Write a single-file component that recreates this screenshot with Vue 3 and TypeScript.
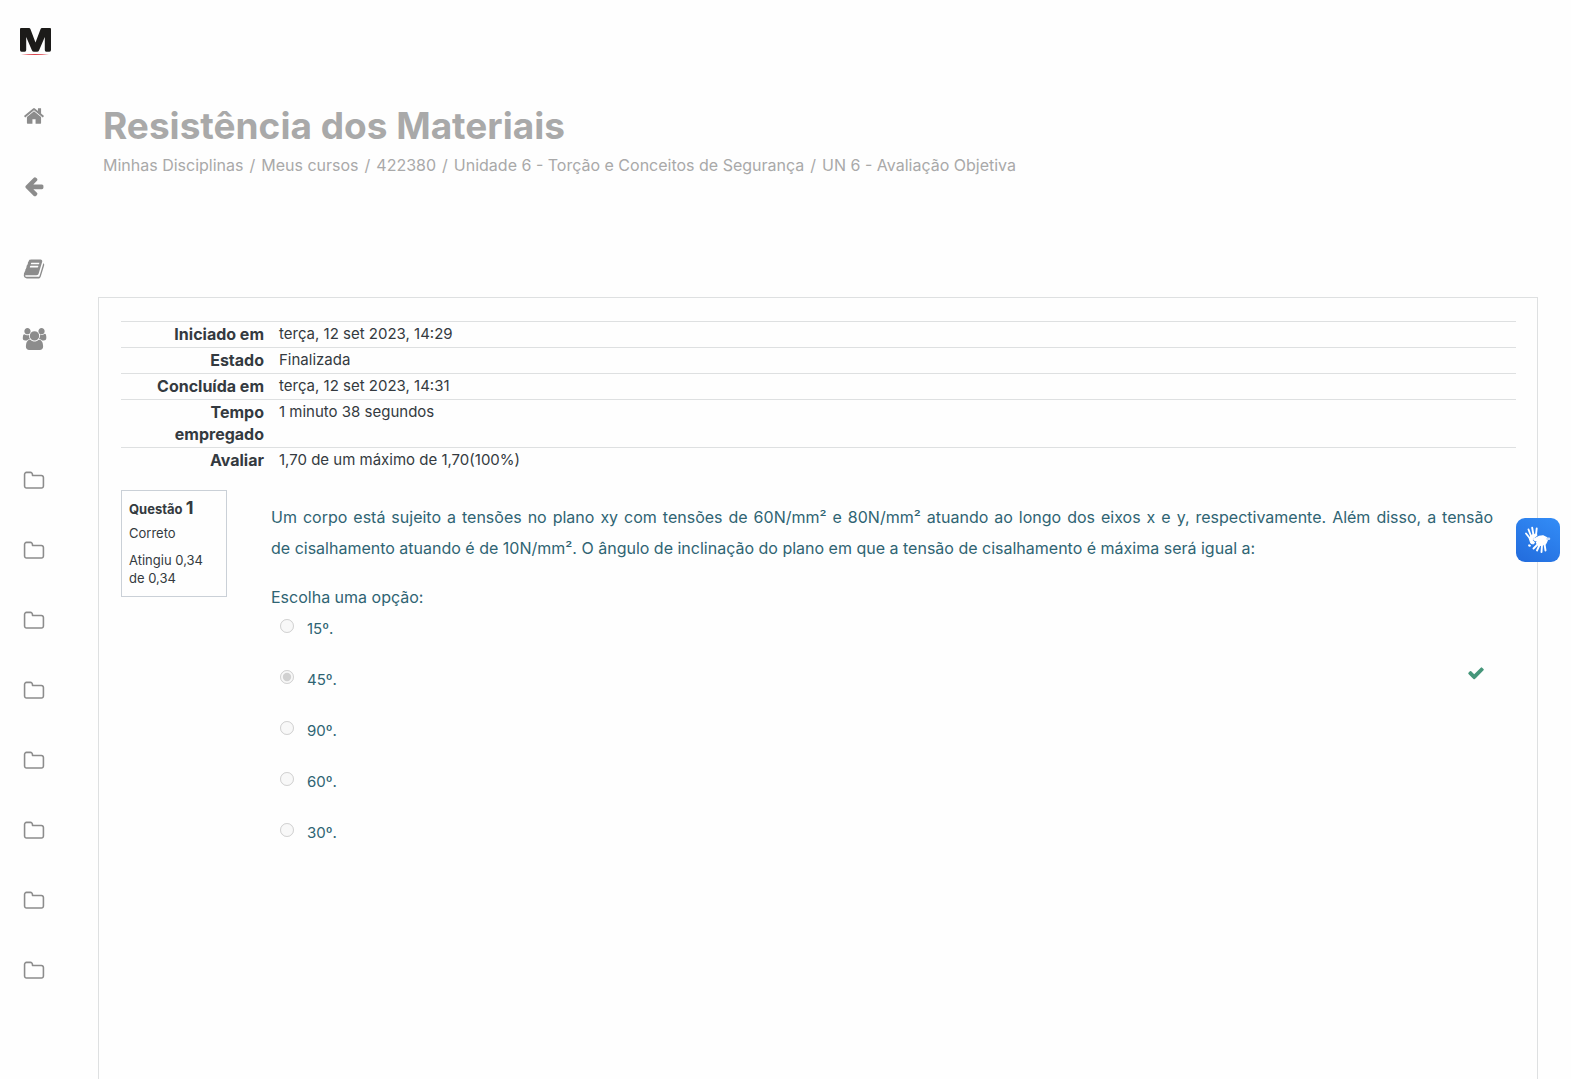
<script setup lang="ts">
interface NavItem {
  label: string
  icon: 'home' | 'arrow' | 'book' | 'users' | 'folder'
  spaced?: 'small' | 'large'
}

const icons: Record<NavItem['icon'], string> = {
  home: 'M1472 992v480q0 26-19 45t-45 19h-384v-384h-256v384h-384q-26 0-45-19t-19-45v-480q0-1 .5-3t.5-3l575-474 575 474q1 2 1 6zm223-69l-62 74q-8 9-21 11h-3q-13 0-21-7l-692-577-692 577q-12 8-24 7-13-2-21-11l-62-74q-8-10-7-23.5t11-21.5l719-599q32-26 76-26t76 26l244 204v-195q0-14 9-23t23-9h192q14 0 23 9t9 23v408l219 182q10 8 11 21.5t-7 23.5z',
  arrow: 'M1664 896v128q0 53-32.5 90.5t-84.5 37.5h-704l293 294q38 36 38 90t-38 90l-75 76q-37 37-90 37-52 0-91-37l-651-652q-37-37-37-90 0-52 37-91l651-650q38-38 91-38 52 0 90 38l75 74q38 38 38 91t-38 91l-293 293h704q52 0 84.5 37.5t32.5 90.5z',
  book: 'M1703 478q40 57 18 129l-275 906q-19 64-76.5 107.5t-122.5 43.5h-923q-77 0-148.5-53.5t-99.5-131.5q-24-67-2-127 0-4 3-27t4-37q1-8-3-21.5t-3-19.5q2-11 8-21t16.5-23.5 16.5-23.5q23-38 45-91.5t30-91.5q3-10 .5-30t-.5-28q3-11 17-28t17-23q21-36 42-92t25-90q1-9-2.5-32t.5-28q4-13 22-30.5t22-22.5q19-26 42.5-84.5t27.5-96.5q1-8-3-25.5t-2-26.5q2-8 9-18t18-23 17-21q8-12 16.5-30.5t15-35 16-36 19.5-32 26.5-23.5 36-11.5 47.5 5.5l-1 3q38-9 51-9h761q74 0 114 56t18 130l-274 906q-36 119-71.5 153.5t-128.5 34.5h-869q-27 0-38 15-11 16-1 43 24 70 144 70h923q29 0 56-15.5t35-41.5l300-987q7-22 5-57 38 15 59 43zm-1064 2q-4 13 2 22.5t20 9.5h608q13 0 25.5-9.5t16.5-22.5l21-64q4-13-2-22.5t-20-9.5h-608q-13 0-25.5 9.5t-16.5 22.5zm-83 256q-4 13 2 22.5t20 9.5h608q13 0 25.5-9.5t16.5-22.5l21-64q4-13-2-22.5t-20-9.5h-608q-13 0-25.5 9.5t-16.5 22.5z',
  users: 'M657 896q-162 5-265 128h-134q-82 0-138-40.5t-56-118.5q0-353 124-353 6 0 43.5 21t97.5 42.5 119 21.5q67 0 133-23-5 37-5 66 0 159 93 293zm1071 637q0 120-73 189.5t-194 69.5h-874q-121 0-194-69.5t-73-189.5q0-53 3.5-103.5t14-109 26.5-108.5 43-97.5 62-81 85.5-53.5 111.5-20q10 0 43 21.5t73 48 107 48 135 21.5 135-21.5 107-48 73-48 43-21.5q61 0 111.5 20t85.5 53.5 62 81 43 97.5 26.5 108.5 14 109 3.5 103.5zm-1024-1277q0 106-75 181t-181 75-181-75-75-181 75-181 181-75 181 75 75 181zm704 384q0 159-112.5 271.5t-271.5 112.5-271.5-112.5-112.5-271.5 112.5-271.5 271.5-112.5 271.5 112.5 112.5 271.5zm576 225q0 78-56 118.5t-138 40.5h-134q-103-123-265-128 93-134 93-293 0-29-5-66 66 23 133 23 59 0 119-21.5t97.5-42.5 43.5-21q124 0 124 353zm-128-609q0 106-75 181t-181 75-181-75-75-181 75-181 181-75 181 75 75 181z',
  folder: 'M1600 1312v-704q0-40-28-68t-68-28h-704q-40 0-68-28t-28-68v-64q0-40-28-68t-68-28h-320q-40 0-68 28t-28 68v960q0 40 28 68t68 28h1216q40 0 68-28t28-68zm128-704v704q0 92-66 158t-158 66h-1216q-92 0-158-66t-66-158v-960q0-92 66-158t158-66h320q92 0 158 66t66 158v32h672q92 0 158 66t66 158z'
}

const nav: NavItem[] = [
  { label: 'Início', icon: 'home' },
  { label: 'Voltar', icon: 'arrow' },
  { label: 'Disciplina', icon: 'book', spaced: 'small' },
  { label: 'Participantes', icon: 'users' },
  ...Array.from({ length: 8 }, (_, i): NavItem => ({
    label: `Unidade ${i + 1}`,
    icon: 'folder',
    spaced: i === 0 ? 'large' : undefined
  }))
]

const crumbs = [
  'Minhas Disciplinas',
  'Meus cursos',
  '422380',
  'Unidade 6 - Torção e Conceitos de Segurança',
  'UN 6 - Avaliação Objetiva'
]

const summary = [
  ['Iniciado em', 'terça, 12 set 2023, 14:29'],
  ['Estado', 'Finalizada'],
  ['Concluída em', 'terça, 12 set 2023, 14:31'],
  ['Tempo empregado', '1 minuto 38 segundos'],
  ['Avaliar', '1,70 de um máximo de 1,70(100%)']
]

const options = ['15º.', '45º.', '90º.', '60º.', '30º.']
const chosen = '45º.'
</script>

<template>
  <div class="page">
    <nav class="sidebar">
      <a class="logo" href="#" aria-label="Página inicial">
        <svg width="34" height="30" viewBox="0 0 34 30">
          <path d="M1 23V2Q1 1 2 1H10Q11 1 11.400 2L16.500 15.500L21.600 2Q22 1 23 1H31Q32 1 32 2V23Q32 24.800 30.500 24.800H27.200Q25.800 24.800 25.800 23V10L20 23.500Q19.500 24.800 18 24.800H15Q13.500 24.800 13 23.500L7.200 10V23Q7.200 24.800 5.800 24.800H2.500Q1 24.800 1 23Z" fill="#1c1b19" />
          <path d="M2 27.400Q16 26.400 30 27.400Q16 28.400 2 27.400Z" fill="#d9414a" />
        </svg>
      </a>
      <a v-for="item in nav" :key="item.label" href="#" :aria-label="item.label" :class="['nav-link', item.spaced]">
        <svg :class="item.icon" :viewBox="item.icon === 'users' ? '0 0 2048 1792' : '0 0 1792 1792'">
          <path :d="icons[item.icon]" />
        </svg>
      </a>
    </nav>

    <main class="main">
      <header class="heading">
        <h1>Resistência dos Materiais</h1>
        <ol class="crumbs">
          <li v-for="crumb in crumbs" :key="crumb"><a href="#">{{ crumb }}</a></li>
        </ol>
      </header>

      <section class="card">
        <table class="summary">
          <tbody>
            <tr v-for="[name, value] in summary" :key="name">
              <th scope="row">{{ name }}</th>
              <td>{{ value }}</td>
            </tr>
          </tbody>
        </table>

        <div class="question">
          <aside class="info">
            <h2>Questão <span>1</span></h2>
            <p>Correto</p>
            <p>Atingiu 0,34 de 0,34</p>
          </aside>
          <div class="body">
            <p class="statement">
              Um corpo está sujeito a tensões no plano xy com tensões de 60N/mm² e 80N/mm² atuando ao longo dos eixos x e y, respectivamente. Além disso, a tensão de&nbsp;cisalhamento atuando é de 10N/mm². O ângulo de inclinação do plano em que a tensão de cisalhamento é máxima será igual a:
            </p>
            <fieldset>
              <legend>Escolha uma opção:</legend>
              <div v-for="(option, i) in options" :key="option" class="option">
                <input :id="`option-${i}`" type="radio" name="answer" :checked="option === chosen" disabled />
                <label :for="`option-${i}`">{{ option }}</label>
                <svg v-if="option === chosen" class="check" viewBox="0 0 1792 1792" role="img" aria-label="Correto">
                  <path d="M1671 566q0 40-28 68l-724 724-136 136q-28 28-68 28t-68-28l-136-136-362-362q-28-28-28-68t28-68l136-136q28-28 68-28t68 28l294 295 656-657q28-28 68-28t68 28l136 136q28 28 28 68z" />
                </svg>
              </div>
            </fieldset>
          </div>
        </div>
      </section>
    </main>

    <button class="libras" type="button" aria-label="Tradutor de Libras">
      <svg width="44" height="44" viewBox="0 0 44 44" fill="none" stroke="#fff" stroke-linecap="round" stroke-linejoin="round">
        <path d="M14 20.500L10 15.500M15 18L12.500 11.500M17.500 17L16.200 9.800M20 17L20.700 10.500" stroke-width="1.900" />
        <path d="M13.500 20L15.500 17L20.500 16L21 17.500L17 20.500L16.800 22.500L18.500 24.500L17.500 26L15 25.500L14 23Z" fill="#fff" stroke-width="1" />
        <path d="M13.200 27.500L13.800 27.700" stroke-width="2.200" />
        <path d="M17.800 21.200L23 18.500L27 17.800L30.500 19.500L31.200 22.500L29.500 26L25 27.500L21.500 26.500L20.500 24.500L23 22L19 22.500Z" fill="#fff" stroke-width="1.300" />
        <path d="M22 26L17.500 30.500M23.500 27L21 32.500M26 27L25.500 34M28.500 26L29.500 32.500" stroke-width="1.900" />
        <path d="M31.500 20.800L33 20.800" stroke="#c5dcfb" stroke-width="2.500" />
      </svg>
    </button>
  </div>
</template>

<style>
body {
  margin: 0;
  background: #fefefe;
}
</style>

<style scoped>
* {
  box-sizing: border-box;
}

.page {
  display: flex;
  min-height: 100vh;
  color: #343a40;
  font: 16px/22px Inter, "Open Sans", sans-serif;
}

a {
  color: inherit;
  text-decoration: none;
}

.sidebar {
  display: flex;
  flex: none;
  flex-direction: column;
  align-items: center;
  width: 68px;
  padding-top: 27px;
}

.logo {
  height: 54px;
  padding-left: 3px;
}

.nav-link {
  display: flex;
  flex: none;
  align-items: center;
  justify-content: center;
  width: 68px;
  height: 70px;
}

.small {
  margin-top: 13px;
}

.large {
  margin-top: 72px;
}

.nav-link svg {
  width: 22px;
  height: 22px;
  fill: #8c8c8c;
}

.nav-link .users {
  width: 25px;
}

.main {
  display: flex;
  flex: 1;
  flex-direction: column;
  min-width: 0;
  padding: 104px 33px 0 30px;
}

.heading {
  height: 193px;
  padding-left: 5px;
  color: #a9a9a9;
}

h1 {
  margin: 0;
  font-size: 37px;
  line-height: 44px;
  font-weight: 700;
}

.crumbs {
  display: flex;
  flex-wrap: wrap;
  margin: 6px 0 0;
  padding: 0;
  list-style: none;
}

.crumbs li + li::before {
  content: "/";
  padding: 0 6px;
}

.card {
  flex: 1;
  padding: 23px 21px 0 22px;
  border: 1px solid #dee0e1;
  border-bottom: 0;
}

.summary {
  width: 100%;
  border-collapse: collapse;
}

.summary tr {
  border-top: 1px solid #dee0e1;
}

th,
td {
  padding: 1px 8px 2px 7px;
  text-align: left;
  vertical-align: top;
}

th {
  width: 151px;
  font-weight: 700;
  text-align: right;
}

td {
  font-size: 15px;
}

.question {
  display: flex;
  align-items: flex-start;
  margin-top: 17px;
}

.info {
  flex: none;
  width: 106px;
  height: 107px;
  padding: 5px 7px;
  border: 1px solid #cad0d7;
  font-size: 13px;
  line-height: 18px;
}

.info h2 {
  margin: 0 0 3px;
  font-size: 13px;
  line-height: 24px;
}

.info h2 span {
  font-size: 18px;
}

.info p {
  margin: 0 0 9px;
}

.body {
  flex: 1;
  min-width: 0;
  padding: 12px 23px 0 44px;
  color: #2f6473;
}

.statement {
  margin: 0 0 21px;
  line-height: 31px;
  text-align: justify;
}

fieldset {
  min-width: 0;
  margin: 0;
  padding: 0;
  border: 0;
}

legend {
  padding: 0;
  line-height: 24px;
}

.option {
  display: flex;
  align-items: flex-start;
  height: 51px;
  padding: 0 8px 0 9px;
}

.option input {
  width: 14px;
  height: 14px;
  margin: 10px 13px 0 0;
}

.option label {
  flex: 1;
  margin-top: 9px;
  font-size: 15px;
}

.check {
  width: 18px;
  height: 18px;
  margin-top: 4px;
  fill: #45967a;
}

.libras {
  position: fixed;
  top: 518px;
  right: 11px;
  width: 44px;
  height: 44px;
  padding: 0;
  border: 0;
  border-radius: 9px;
  background: linear-gradient(30deg, #226bdc, #338df7);
}

.libras svg {
  display: block;
}
</style>
